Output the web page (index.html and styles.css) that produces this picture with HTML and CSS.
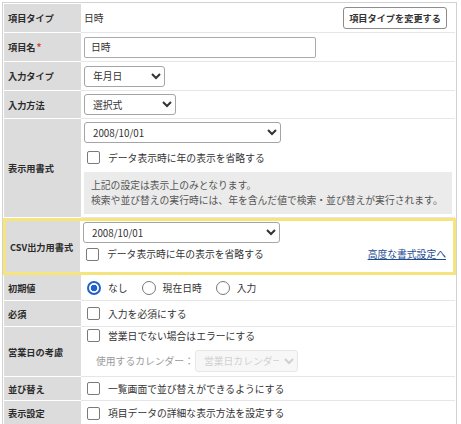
FILE: index.html
```html
<!DOCTYPE html>
<html lang="ja">
<head>
    <meta charset="UTF-8">
    <meta name="viewport" content="width=device-width, initial-scale=1.0">
    <title>項目設定</title>
    <link rel="stylesheet" href="styles.css">
</head>
<body>
    <div class="field-table">
        <div class="row row-28">
            <div class="label">項目タイプ</div>
            <div class="value">
                <span>日時</span>
                <button type="button" class="btn">項目タイプを変更する</button>
            </div>
        </div>
        <div class="row row-28">
            <div class="label">項目名<span class="req">*</span></div>
            <div class="value">
                <input type="text" class="text-input" value="日時">
            </div>
        </div>
        <div class="row row-28">
            <div class="label">入力タイプ</div>
            <div class="value">
                <select class="sel sel-s"><option>年月日</option></select>
            </div>
        </div>
        <div class="row row-27">
            <div class="label">入力方法</div>
            <div class="value">
                <select class="sel sel-m"><option>選択式</option></select>
            </div>
        </div>
        <div class="row row-format">
            <div class="label">表示用書式</div>
            <div class="value value-stack">
                <select class="sel sel-l"><option>2008/10/01</option></select>
                <label class="check check-tall"><input type="checkbox">データ表示時に年の表示を省略する</label>
                <div class="note">
                    上記の設定は表示上のみとなります。<br>
                    検索や並び替えの実行時には、年を含んだ値で検索・並び替えが実行されます。
                </div>
            </div>
        </div>
        <div class="row row-csv">
            <div class="label">CSV出力用書式</div>
            <div class="value value-stack">
                <select class="sel sel-l"><option>2008/10/01</option></select>
                <div class="check-line">
                    <label class="check"><input type="checkbox">データ表示時に年の表示を省略する</label>
                    <a href="#" class="link">高度な書式設定へ</a>
                </div>
            </div>
        </div>
        <div class="row row-25">
            <div class="label">初期値</div>
            <div class="value">
                <label class="radio"><input type="radio" name="init" checked>なし</label>
                <label class="radio"><input type="radio" name="init">現在日時</label>
                <label class="radio"><input type="radio" name="init">入力</label>
            </div>
        </div>
        <div class="row row-25">
            <div class="label">必須</div>
            <div class="value">
                <label class="check"><input type="checkbox">入力を必須にする</label>
            </div>
        </div>
        <div class="row row-biz">
            <div class="label">営業日の考慮</div>
            <div class="value value-stack">
                <label class="check check-short"><input type="checkbox">営業日でない場合はエラーにする</label>
                <div class="calendar">
                    <span class="muted">使用するカレンダー：</span>
                    <select class="sel sel-disabled" disabled><option>営業日カレンダー</option></select>
                </div>
            </div>
        </div>
        <div class="row row-23">
            <div class="label">並び替え</div>
            <div class="value">
                <label class="check"><input type="checkbox">一覧画面で並び替えができるようにする</label>
            </div>
        </div>
        <div class="row row-23 row-last">
            <div class="label">表示設定</div>
            <div class="value">
                <label class="check"><input type="checkbox">項目データの詳細な表示方法を設定する</label>
            </div>
        </div>
    </div>
</body>
</html>
```

FILE: styles.css
```css
body {
    margin: 0;
    font-family: "Noto Sans CJK JP", "Noto Sans", sans-serif;
    font-size: 9.8px;
    color: #333;
    background: #fff;
}

.field-table {
    margin: 2px 4px 0 2px;
    border: 1px solid #d2d2d2;
    padding: 1px;
}

.row {
    display: grid;
    grid-template-columns: 77px 1fr;
}

.row-28 { height: 29px; }
.row-27 { height: 28px; }
.row-25 { height: 26px; }
.row-23 { height: 24px; }
.row-format { height: 99px; }
.row-biz { height: 50px; }

.label {
    display: flex;
    align-items: center;
    padding-left: 4px;
    background: #dcdcdc;
    border-bottom: 1px solid #fff;
    font-size: 9.2px;
    font-weight: bold;
    color: #2b2b2b;
}

.value {
    display: flex;
    align-items: center;
    padding: 0 8px 0 3px;
    border-bottom: 1px solid #e6e6e6;
}

.row-last .label,
.row-last .value {
    border-bottom: none;
}

.req {
    color: #d9463e;
    font-size: 10px;
    margin-left: 1px;
    position: relative;
    top: -1px;
}

.value-stack {
    flex-direction: column;
    align-items: flex-start;
    justify-content: flex-start;
}

.row-format .value {
    padding-top: 3px;
    padding-right: 3px;
}

/* highlighted CSV row */
.row-csv {
    height: 51px;
    margin: 0 -1px;
    border: 3px solid #f6e47c;
    grid-template-columns: 74px 1fr;
}

.row-csv .label,
.row-csv .value {
    border-bottom: none;
}

.row-csv .value {
    padding-top: 1px;
    padding-right: 7px;
}

.btn {
    margin-left: auto;
    height: 22px;
    padding: 0 5px;
    background: #fff;
    border: 1px solid #8c8c8c;
    border-radius: 3px;
    font-family: inherit;
    font-size: 9.2px;
    font-weight: bold;
    color: #333;
}

.text-input {
    width: 232px;
    height: 21px;
    box-sizing: border-box;
    padding: 0 6px;
    border: 1px solid #aaa;
    border-radius: 2px;
    font-family: inherit;
    font-size: 9.8px;
    color: #333;
}

.sel {
    height: 21px;
    box-sizing: border-box;
    padding: 0 2px 0 4px;
    border: 1px solid #a5a5a5;
    border-radius: 3px;
    background: #fff;
    font-family: inherit;
    font-size: 9.8px;
    color: #333;
}

.sel-s { width: 81px; }
.sel-m { width: 92px; }
.sel-l { width: 197px; }

.sel-disabled {
    width: 103px;
    height: 22px;
    background: #f4f4f4;
    border-color: #dedede;
    color: #bdbdbd;
}

.check,
.radio {
    display: flex;
    align-items: center;
}

.check-tall {
    height: 29px;
}

.check input {
    appearance: none;
    width: 13px;
    height: 13px;
    margin: 0 8px 0 3px;
    border: 1px solid #7a7a7a;
    border-radius: 2px;
    background: #fff;
}

.radio {
    margin-right: 11px;
}

.radio input {
    appearance: none;
    width: 14px;
    height: 14px;
    margin: 0 7px 0 3px;
    border: 1px solid #777;
    border-radius: 50%;
    background: #fff;
}

.radio input:checked {
    border: 2px solid #1f62cf;
    background: radial-gradient(circle, #1f62cf 0 3px, #fff 3.6px);
}

.note {
    box-sizing: border-box;
    width: 100%;
    height: 42px;
    padding: 6px 7px 0;
    background: #ebebeb;
    color: #555;
    line-height: 15px;
}

.check-line {
    display: flex;
    align-items: center;
    justify-content: space-between;
    width: 100%;
    height: 22px;
}

.link {
    color: #1d4b8f;
    text-decoration: underline;
}

.row-biz .value {
    padding-top: 1px;
}

.check-short {
    height: 15px;
}

.calendar {
    display: flex;
    align-items: center;
    margin-top: 7px;
    padding-left: 12px;
}

.muted {
    color: #9a9a9a;
    margin-right: 1px;
}
```
